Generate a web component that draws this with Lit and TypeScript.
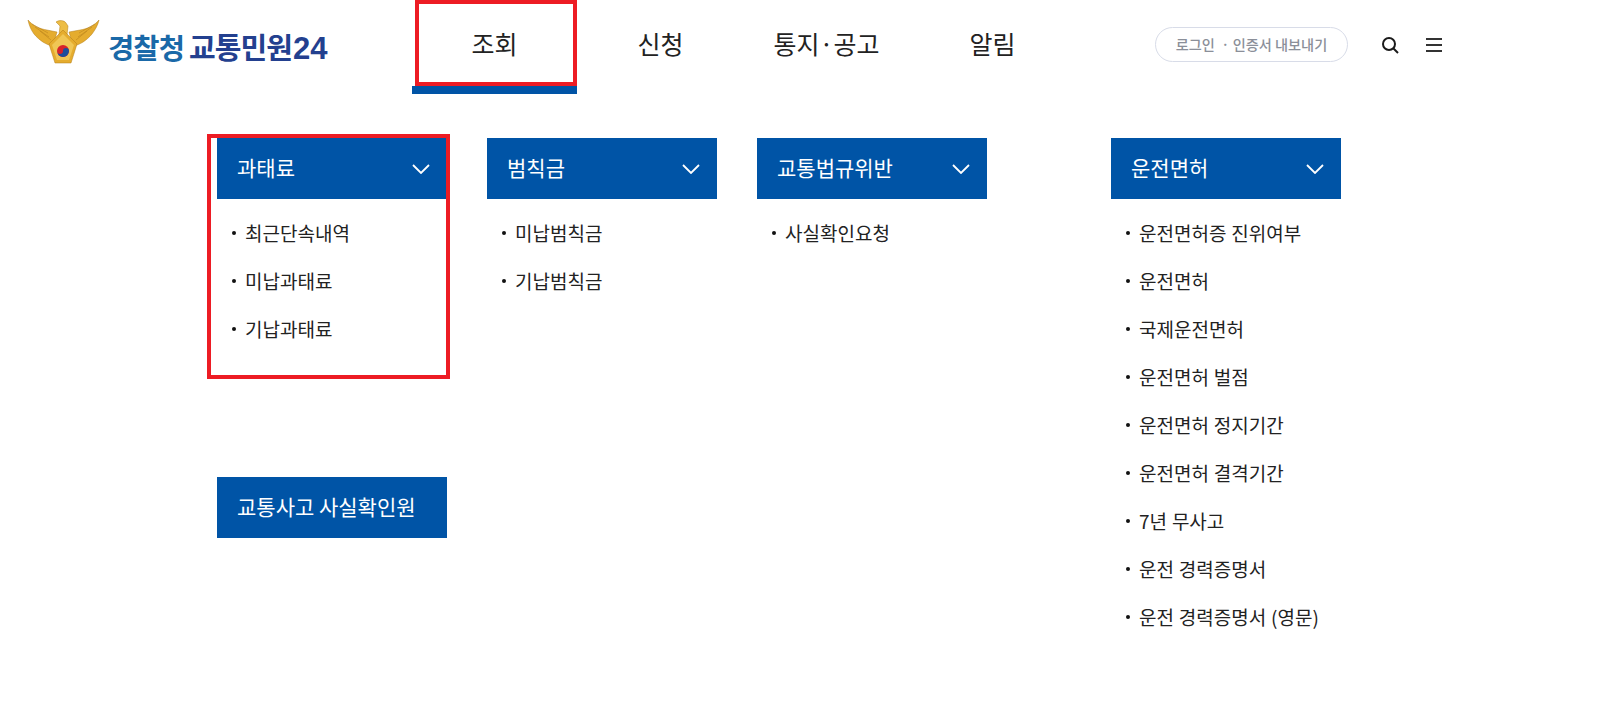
import { LitElement, html, css } from "lit";
import { customElement } from "lit/decorators.js";

const groups = [
  { title: "과태료", items: ["최근단속내역", "미납과태료", "기납과태료"] },
  { title: "범칙금", items: ["미납범칙금", "기납범칙금"] },
  { title: "교통법규위반", items: ["사실확인요청"] },
  {
    title: "운전면허",
    items: ["운전면허증 진위여부", "운전면허", "국제운전면허", "운전면허 벌점", "운전면허 정지기간", "운전면허 결격기간", "7년 무사고", "운전 경력증명서", "운전 경력증명서 (영문)"],
  },
];

@customElement("app-root")
export class AppRoot extends LitElement {
  static styles = css`
    :host { display: block; position: relative; width: 1616px; height: 716px; background: #fff; overflow: hidden;
      font-family: "Noto Sans CJK KR", "Noto Sans", sans-serif; color: #222; }
    header { display: flex; align-items: flex-start; height: 94px; }
    .logo { display: flex; align-items: center; width: 412px; height: 86px; padding-left: 27px; box-sizing: border-box; }
    .logo svg { width: 73px; height: 46px; margin-top: -2px; flex: none; }
    .brand { margin-left: 8px; font-size: 29px; font-weight: 700; letter-spacing: -0.9px; white-space: nowrap; color: #23408f; margin-top: 5px; display: flex; align-items: baseline; }
    .brand b { color: #1a69a8; font-weight: 700; font-size: 28.5px; letter-spacing: -0.9px; margin-right: 5px; }
    .brand em { font-style: normal; font-family: "Liberation Sans", sans-serif; font-weight: 700; font-size: 31px; letter-spacing: 0; margin-left: 1px; }
    nav { display: flex; width: 663px; }
    .tab { width: 165px; height: 94px; box-sizing: border-box; display: flex; align-items: center; justify-content: center; padding-bottom: 8px; font-size: 25px; font-weight: 400; color: #222; }
    .tab + .tab { margin-left: 1px; }
    .tab.on { border-bottom: 8px solid #0054a6; padding-bottom: 0; }
    .tools { display: flex; align-items: center; height: 88px; margin-left: 80px; }
    .login { display: flex; align-items: center; justify-content: center; width: 193px; height: 35px; box-sizing: border-box; border: 1px solid #d8dce8; border-radius: 18px; font-size: 14.2px; font-weight: 500; color: #8b8f99; white-space: pre; }
    .search { width: 20px; height: 20px; margin-left: 32px; margin-top: 2px; }
    .menu { width: 16px; height: 14px; margin-left: 26px; margin-top: 2px; display: flex; flex-direction: column; justify-content: space-between; }
    .menu i { display: block; height: 2px; background: #333; }
    main { display: flex; align-items: flex-start; padding: 44px 0 0 217px; }
    .col { width: 230px; margin-right: 40px; }
    .col.last { margin-left: 84px; margin-right: 0; }
    .head { display: flex; align-items: center; justify-content: space-between; height: 61px; padding: 0 17px 0 20px; background: #0054a6; color: #fff; font-size: 21px; font-weight: 400; box-sizing: border-box; white-space: nowrap; }
    .head span { margin-top: -3px; }
    .head svg { width: 18px; height: 10px; }
    ul { list-style: none; margin: 9px 0 0; padding: 0; }
    li { display: flex; align-items: center; height: 48px; padding-left: 15px; font-size: 19px; font-weight: 400; color: #222; word-spacing: 0.6px; }
    li::before { content: ""; width: 4px; height: 4px; border-radius: 50%; background: #111; margin: 2px 9px 0 0; flex: none; }
    .first ul { height: 269px; }
    .mark { position: absolute; box-sizing: border-box; border: 4px solid #ed1c24; pointer-events: none; }
    .mark.tab-mark { left: 415px; top: 0; width: 162px; height: 86px; }
    .mark.col-mark { left: 207px; top: 134px; width: 243px; height: 245px; }
  `;

  private logo() {
    return html`<svg viewBox="0 0 73 46" aria-hidden="true">
      <g fill="#e5ac2e" stroke="#b27c18" stroke-width=".5" stroke-linejoin="round">
        <path d="M1 1 C6 7 13 10 20 11 L30 13 L26 27 C19 26 12 21 7 15 C4 11 2 6 1 1Z"/>
        <path d="M72 1 C67 7 60 10 53 11 L42 13 L46 27 C53 26 60 21 65 15 C68 11 71 6 72 1Z"/>
        <path d="M8 8 L22 18 M13 12 L24 21 M5 5 L21 14" fill="none"/>
        <path d="M65 8 L51 18 M60 12 L49 21 M68 5 L52 14" fill="none"/>
        <path fill="#edbd45" d="M29 3 C32 1 37 1 39 4 L41 7 L40 16 L36 20 L32 16 L33 7 L29 3Z"/>
        <path d="M36 11 L50 25 L44 44 L28 44 L22 25Z"/>
        <path fill="#f0c655" stroke="none" d="M36 15 L47 26 L42 41 L30 41 L25 26Z"/>
      </g>
      <circle cx="36" cy="32" r="6" fill="#d8232a"/>
      <path fill="#1d4f9c" d="M30 32 A6 6 0 0 0 42 32 A3 3 0 0 0 36 32 A3 3 0 0 1 30 32Z"/>
    </svg>`;
  }

  private group(g: { title: string; items: string[] }, cls = "") {
    return html`<section class="col ${cls}">
      <div class="head">
        <span>${g.title}</span>
        <svg viewBox="0 0 18 10" fill="none" stroke="#fff" stroke-width="1.8"><path d="M1 1l8 8 8-8"/></svg>
      </div>
      <ul>${g.items.map((i) => html`<li>${i}</li>`)}</ul>
      ${cls === "first" ? html`<div class="head"><span>교통사고 사실확인원</span></div>` : ""}
    </section>`;
  }

  render() {
    return html`
      <header>
        <div class="logo">${this.logo()}<span class="brand"><b>경찰청</b>교통민원<em>24</em></span></div>
        <nav>
          <div class="tab on">조회</div>
          <div class="tab">신청</div>
          <div class="tab">통지·공고</div>
          <div class="tab">알림</div>
        </nav>
        <div class="tools">
          <div class="login">로그인  · 인증서 내보내기</div>
          <svg class="search" viewBox="0 0 20 20" fill="none" stroke="#1a1a1a" stroke-width="2"><circle cx="9" cy="9" r="6"/><path d="M13.5 13.5l4.5 4.5"/></svg>
          <div class="menu"><i></i><i></i><i></i></div>
        </div>
      </header>
      <main>
        ${this.group(groups[0], "first")}
        ${this.group(groups[1])}
        ${this.group(groups[2])}
        ${this.group(groups[3], "last")}
      </main>
      <div class="mark tab-mark"></div>
      <div class="mark col-mark"></div>
    `;
  }
}
